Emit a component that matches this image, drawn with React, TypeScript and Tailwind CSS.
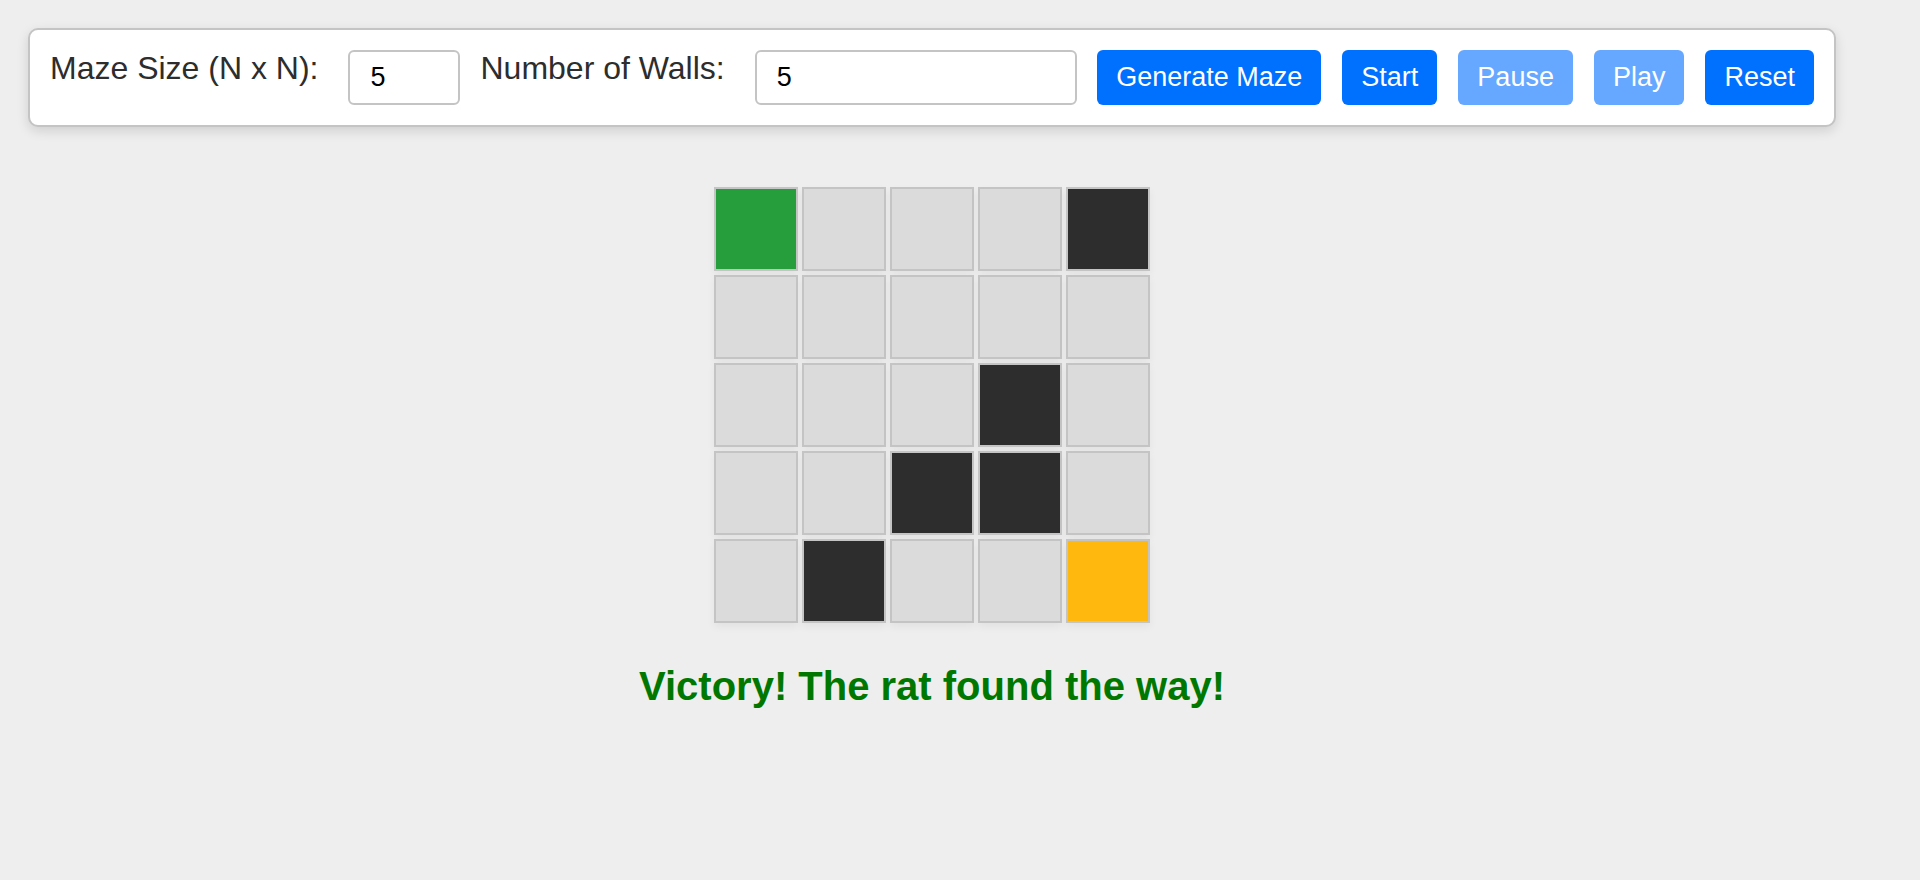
import { useState, type ButtonHTMLAttributes, type InputHTMLAttributes } from "react";

type Cell = "open" | "wall" | "start" | "goal";

const LAYOUT = ["S...#", ".....", "...#.", "..##.", ".#..G"];

const CELL_OF: Record<string, Cell> = { ".": "open", "#": "wall", S: "start", G: "goal" };

const CELL_STYLE: Record<Cell, string> = {
  open: "bg-[#dbdbdb]",
  wall: "bg-[#2d2d2d]",
  start: "bg-[#269e3c]",
  goal: "bg-[#ffb90e]",
};

function Button(props: ButtonHTMLAttributes<HTMLButtonElement>) {
  return (
    <button
      type="button"
      className="shrink-0 rounded-md bg-[#0070ff] px-[19px] py-3 text-[27px] leading-[31px] text-white disabled:bg-[#66a8ff]"
      {...props}
    />
  );
}

const fieldStyle =
  "rounded-md border-2 border-[#c4c4c4] bg-white px-5 py-2.5 text-[27px] leading-[31px] text-black outline-none";

function NumberField({ className, ...props }: InputHTMLAttributes<HTMLInputElement>) {
  return <input type="number" className={`${fieldStyle} ${className}`} {...props} />;
}

export default function App() {
  const [size, setSize] = useState("5");
  const [walls, setWalls] = useState("5");

  return (
    <div className="min-h-screen bg-[#eeeeee] pt-7 pr-[84px] pb-7 pl-7 font-['Liberation_Sans',Arial,sans-serif] text-[#2d2d2d]">
      <div className="flex gap-5 rounded-[10px] border-2 border-[#c4c4c4] bg-white p-5 shadow-[0_4px_12px_rgba(0,0,0,0.13)]">
        <label htmlFor="size" className="mr-2.5 shrink-0 text-[32px] leading-9">
          Maze Size (N x N):
        </label>
        <NumberField
          id="size"
          className="w-28 shrink-0"
          value={size}
          onChange={(e) => setSize(e.target.value)}
        />
        <label htmlFor="walls" className="mr-2.5 shrink-0 text-[32px] leading-9">
          Number of Walls:
        </label>
        <NumberField
          id="walls"
          className="w-0 min-w-28 flex-1"
          value={walls}
          onChange={(e) => setWalls(e.target.value)}
        />
        <div className="flex shrink-0 gap-[21px]">
          <Button>Generate Maze</Button>
          <Button>Start</Button>
          <Button disabled>Pause</Button>
          <Button disabled>Play</Button>
          <Button>Reset</Button>
        </div>
      </div>

      <main className="mt-15 flex flex-col items-center gap-10">
        <div className="grid grid-cols-5 gap-1">
          {LAYOUT.flatMap((row, y) =>
            [...row].map((mark, x) => (
              <div
                key={`${y}-${x}`}
                className={`size-21 border-2 border-[#c4c4c4] shadow-[0_4px_8px_rgba(0,0,0,0.05)] ${CELL_STYLE[CELL_OF[mark]]}`}
              />
            )),
          )}
        </div>
        <h1 className="text-[40px] leading-[46px] font-bold text-[#007800]">
          Victory! The rat found the way!
        </h1>
      </main>
    </div>
  );
}
